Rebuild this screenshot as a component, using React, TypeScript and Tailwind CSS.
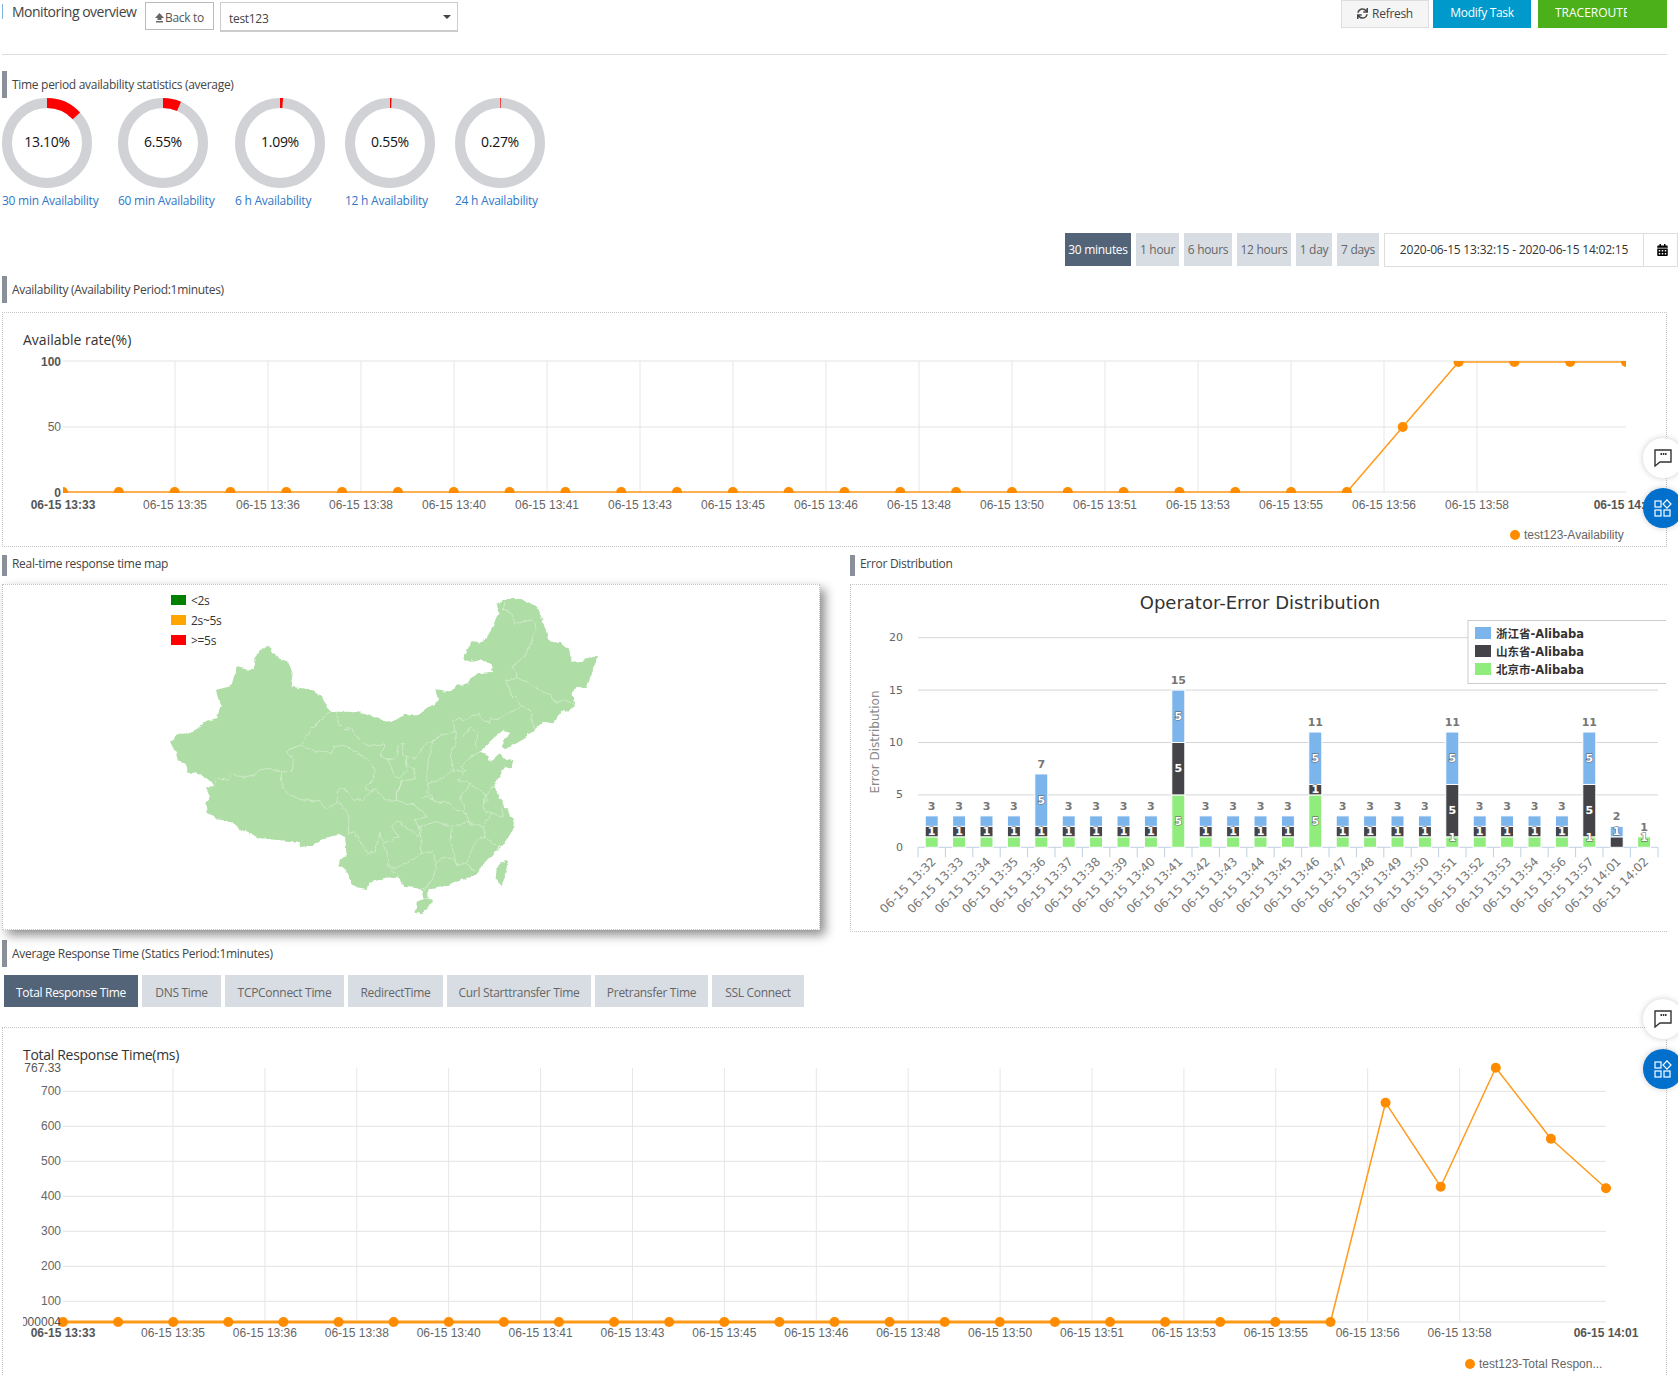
import { FaCalendarAlt, FaSync } from 'react-icons/fa';

const timeLabels = ['13:35', '13:36', '13:38', '13:40', '13:41', '13:43', '13:45', '13:46', '13:48', '13:50', '13:51', '13:53', '13:55', '13:56', '13:58'];

const donuts = [
	{ value: 13.1, text: '13.10%', label: '30 min Availability', width: 'w-[116px]' },
	{ value: 6.55, text: '6.55%', label: '60 min Availability', width: 'w-[117px]' },
	{ value: 1.09, text: '1.09%', label: '6 h Availability', width: 'w-[110px]' },
	{ value: 0.55, text: '0.55%', label: '12 h Availability', width: 'w-[110px]' },
	{ value: 0.27, text: '0.27%', label: '24 h Availability', width: 'w-[110px]' },
];

const ranges = [
	{ label: '30 minutes', width: 'w-[66px]', active: true },
	{ label: '1 hour', width: 'w-[43px]' },
	{ label: '6 hours', width: 'w-[48px]' },
	{ label: '12 hours', width: 'w-[54px]' },
	{ label: '1 day', width: 'w-[36px]' },
	{ label: '7 days', width: 'w-[42px]' },
];

const tabs = [
	{ label: 'Total Response Time', width: 'w-[134px]', active: true },
	{ label: 'DNS Time', width: 'w-[79px]' },
	{ label: 'TCPConnect Time', width: 'w-[119px]' },
	{ label: 'RedirectTime', width: 'w-[95px]' },
	{ label: 'Curl Starttransfer Time', width: 'w-[144px]' },
	{ label: 'Pretransfer Time', width: 'w-[113px]' },
	{ label: 'SSL Connect', width: 'w-[92px]' },
];

// green, dark, blue per minute
const errorBars: [string, number, number, number][] = [
	['13:32', 1, 1, 1], ['13:33', 1, 1, 1], ['13:34', 1, 1, 1], ['13:35', 1, 1, 1], ['13:36', 1, 1, 5],
	['13:37', 1, 1, 1], ['13:38', 1, 1, 1], ['13:39', 1, 1, 1], ['13:40', 1, 1, 1], ['13:41', 5, 5, 5],
	['13:42', 1, 1, 1], ['13:43', 1, 1, 1], ['13:44', 1, 1, 1], ['13:45', 1, 1, 1], ['13:46', 5, 1, 5],
	['13:47', 1, 1, 1], ['13:48', 1, 1, 1], ['13:49', 1, 1, 1], ['13:50', 1, 1, 1], ['13:51', 1, 5, 5],
	['13:52', 1, 1, 1], ['13:53', 1, 1, 1], ['13:54', 1, 1, 1], ['13:56', 1, 1, 1], ['13:57', 1, 5, 5],
	['14:01', 0, 1, 1], ['14:02', 1, 0, 0],
];

const Heading = ({ children }: { children: string }) => (
	<div className="flex h-[27px] items-center border-l-[5px] border-[#8a9099] pl-[5px] text-xs text-[#444]">
		{children}
	</div>
);

const Donut = ({ value, text }: { value: number; text: string }) => {
	const len = 2 * Math.PI * 40;
	return (
		<svg width="90" height="90" viewBox="0 0 90 90">
			<circle cx="45" cy="45" r="40" fill="none" stroke="#d1d2d6" strokeWidth="10" />
			<circle
				cx="45"
				cy="45"
				r="40"
				fill="none"
				stroke="#ff0000"
				strokeWidth="10"
				strokeDasharray={`${(len * value) / 100} ${len}`}
				transform="rotate(-90 45 45)"
			/>
			<text x="45" y="43" textAnchor="middle" dominantBaseline="central" className="fill-[#111] text-sm">
				{text}
			</text>
		</svg>
	);
};

type LineChartProps = {
	viewBox: string;
	id: string;
	right: number;
	top: number;
	bottom: number;
	grid: number[];
	gridStart: number;
	gridStep: number;
	labelY: number;
	values: number[];
	clip: boolean;
	baseEnd?: number;
	legend: string;
	legendX: number;
	legendY: number;
};

const LineChart = (p: LineChartProps) => {
	const step = (p.right - 63) / 28;
	const pts = p.values.map((y, i) => [63 + i * step, y]);
	return (
		<svg viewBox={p.viewBox} className="block h-full w-[1663px] font-['Liberation_Sans',sans-serif] text-xs tracking-normal">
			<clipPath id={p.id}>
				{p.clip ? (
					<rect x="63" y={p.top} width={p.right - 63} height={p.bottom - p.top + 1} />
				) : (
					<rect x="40" y={p.top - 10} width={p.right - 20} height={p.bottom - p.top + 20} />
				)}
			</clipPath>
			{p.grid.map((y) => (
				<line key={y} x1="63" x2={p.right} y1={y} y2={y} stroke="#e3e3e3" />
			))}
			{timeLabels.map((t, i) => (
				<g key={t}>
					<line
						x1={p.gridStart + i * p.gridStep}
						x2={p.gridStart + i * p.gridStep}
						y1={p.top}
						y2={p.bottom}
						stroke="#e6e6e6"
					/>
					<text
						x={p.gridStart + i * p.gridStep}
						y={p.labelY}
						textAnchor="middle"
						dominantBaseline="central"
						className="fill-[#666]"
					>
						06-15 {t}
					</text>
				</g>
			))}
			<text x="63" y={p.labelY} textAnchor="middle" dominantBaseline="central" className="fill-[#555] font-bold">
				06-15 13:33
			</text>
			<text x={p.right} y={p.labelY} textAnchor="middle" dominantBaseline="central" className="fill-[#555] font-bold">
				06-15 14:01
			</text>
			<g clipPath={`url(#${p.id})`}>
				{p.baseEnd && <line x1="63" x2={p.baseEnd} y1={p.bottom} y2={p.bottom} stroke="#ff9a1a" strokeWidth="3" />}
				<polyline
					points={pts.map((q) => q.join(',')).join(' ')}
					fill="none"
					stroke="#ff9a1a"
					strokeWidth="1.5"
					strokeLinejoin="round"
				/>
				{pts.map(([x, y]) => (
					<circle key={x} cx={x} cy={y} r="5" fill="#ff8c00" />
				))}
			</g>
			<circle cx={p.legendX} cy={p.legendY} r="5" fill="#ff8c00" />
			<text x={p.legendX + 9} y={p.legendY} dominantBaseline="central" className="fill-[#666]">
				{p.legend}
			</text>
		</svg>
	);
};

const ErrorChart = () => {
	const base = 847.3;
	const unit = 10.48;
	const start = 918;
	const band = 27.4;
	return (
		<svg viewBox="851 585 815 346" className="block h-full w-[815px] font-['DejaVu_Sans','Noto_Sans_CJK_SC',sans-serif]">
			<text x="1260" y="602" textAnchor="middle" dominantBaseline="central" className="fill-[#333] text-[18px]">
				Operator-Error Distribution
			</text>
			{[20, 15, 10, 5].map((v) => (
				<line key={v} x1={start} x2="1658" y1={base - v * unit} y2={base - v * unit} stroke="#d4d6d8" />
			))}
			{[20, 15, 10, 5, 0].map((v) => (
				<text key={v} x="903" y={base - v * unit} textAnchor="end" dominantBaseline="central" className="fill-[#666] text-[11px]">
					{v}
				</text>
			))}
			<text
				x="875"
				y="742"
				textAnchor="middle"
				dominantBaseline="central"
				transform="rotate(-90 875 742)"
				className="fill-[#888] text-xs"
			>
				Error Distribution
			</text>
			<line x1={start} x2="1658" y1={base} y2={base} stroke="#c0d0e0" />
			{errorBars.map(([t, green, dark, blue], i) => {
				const cx = start + band * (i + 0.5);
				const tick = start + band * i;
				const segs = [
					{ v: green, from: 0, fill: '#90ed7d', show: green === 5 || dark === 5 || dark === 0, lift: green === 1 ? 5 : 0 },
					{ v: dark, from: green, fill: '#434348', show: blue !== 1 || green !== 0, lift: 0 },
					{ v: blue, from: green + dark, fill: '#7cb5ec', show: blue === 5 || green === 0, lift: 0 },
				];
				const total = green + dark + blue;
				return (
					<g key={t}>
						<line x1={tick} x2={tick} y1={base} y2={base + 10} stroke="#c0d0e0" />
						{segs.map(
							(s) =>
								s.v > 0 && (
									<rect
										key={s.fill}
										x={cx - 6.5}
										y={base - (s.from + s.v) * unit}
										width="13"
										height={s.v * unit}
										fill={s.fill}
										stroke="#fff"
										strokeWidth="1"
									/>
								),
						)}
						{segs.map(
							(s) =>
								s.v > 0 &&
								s.show && (
									<text
										key={s.fill}
										x={cx}
										y={base - (s.from + s.v / 2) * unit - s.lift}
										textAnchor="middle"
										dominantBaseline="central"
										className="fill-white stroke-[#555] text-[11px] font-bold [paint-order:stroke] [stroke-width:1px]"
									>
										{s.v}
									</text>
								),
						)}
						<text
							x={cx}
							y={base - total * unit - 9.5}
							textAnchor="middle"
							dominantBaseline="central"
							className="fill-[#777] text-[11px] font-bold"
						>
							{total}
						</text>
						<text
							x={cx + 5}
							y={base + 15}
							textAnchor="end"
							transform={`rotate(-45 ${cx + 5} ${base + 15})`}
							className="fill-[#777] text-xs"
						>
							06-15 {t}
						</text>
					</g>
				);
			})}
			<line x1="1658" x2="1658" y1={base} y2={base + 10} stroke="#c0d0e0" />
			<rect x="1468" y="620.5" width="210" height="63" fill="#fff" stroke="#ccc" />
			{[
				['浙江省-Alibaba', '#7cb5ec', 627],
				['山东省-Alibaba', '#434348', 645],
				['北京市-Alibaba', '#90ed7d', 663],
			].map(([name, color, y]) => (
				<g key={name as string}>
					<rect x="1475" y={y} width="16" height="12" fill={color as string} />
					<text x="1496" y={(y as number) + 7} dominantBaseline="central" className="fill-[#333] text-[11.5px] font-bold">
						{name}
					</text>
				</g>
			))}
		</svg>
	);
};

const ChinaMap = () => (
	<svg width="470" height="340" viewBox="0 0 1410 1020" className="ml-[147px] mt-[5px] block">
		<filter id="rough" x="0" y="0" width="100%" height="100%">
			<feTurbulence type="fractalNoise" baseFrequency="0.05" numOctaves="2" seed="4" />
			<feDisplacementMap in="SourceGraphic" scale="14" xChannelSelector="R" yChannelSelector="G" />
		</filter>
		<g filter="url(#rough)">
			<g fill="#aedda6">
				<polygon points="62,460 78,435 105,425 125,430 160,400 200,383 212,350 197,300 245,288 260,232 300,240 315,235 313,205 340,172 358,172 385,205 415,215 428,250 422,290 475,297 517,320 540,365 590,365 640,368 680,385 718,397 765,375 810,372 838,350 865,335 856,298 905,305 920,288 955,280 965,262 1000,248 1030,245 1020,220 990,208 950,215 940,205 965,153 990,158 1020,130 1040,80 1050,65 1037,42 1060,30 1110,23 1145,42 1165,55 1190,130 1195,152 1230,160 1258,180 1265,215 1300,212 1345,195 1330,235 1310,295 1280,290 1268,310 1272,345 1255,365 1240,360 1210,400 1180,395 1155,418 1125,445 1100,460 1065,478 1055,470 1077,425 1060,420 1030,445 1000,475 990,485 1015,495 1020,515 1050,490 1060,505 1090,510 1085,530 1055,540 1040,575 1030,590 1065,650 1075,660 1080,680 1095,685 1090,710 1060,765 1050,770 1000,825 975,855 920,875 895,885 860,895 835,898 835,925 820,925 815,900 805,895 760,890 752,865 735,860 700,865 655,880 650,900 620,895 605,880 590,840 565,830 570,810 590,795 585,740 565,735 520,745 490,765 452,772 445,755 385,750 330,745 275,720 245,695 200,688 170,665 165,635 180,620 168,595 190,585 155,555 115,545 105,520 85,515 75,480" />
				<polygon points="800,935 825,925 850,930 835,955 815,970 797,965" />
				<polygon points="1065,810 1075,815 1070,850 1055,885 1037,865 1040,835" />
			</g>
			<g fill="none" stroke="#dcf0d7" strokeWidth="2" strokeLinejoin="round">
				<polyline points="540,365 510,390 480,420 455,465 410,482 432,515 425,545 395,545 360,535 325,540 320,552 285,562 250,553 235,567 200,565 185,590 168,595" />
				<polyline points="455,465 500,485 545,490 555,465 590,472 620,485 660,515 678,545 660,580 640,590 660,605 640,630 610,625 580,595 565,600 560,640 530,655 510,635 450,628 410,610 395,575 395,545" />
				<polyline points="560,365 565,400 585,420 605,415 620,440 650,470 700,460 700,480 690,495 715,510 735,560 750,565 770,540 770,520 795,540 795,565 755,575 735,630 705,630 680,595 660,605" />
				<polyline points="715,510 738,500 745,465 760,460 755,490 770,500 770,520" />
				<polyline points="770,500 795,505 830,460 850,450 875,435 915,425 910,395 925,385 945,390 985,370 1000,395 1020,400 1020,385 1035,385 1045,385 1105,355 1115,345 1140,360 1150,405 1155,418" />
				<polyline points="1065,35 1060,60 1085,70 1095,100 1145,90 1160,110 1145,150 1130,195 1085,230 1100,250 1100,262 1070,270 1085,320 1100,320 1110,345" />
				<polyline points="1100,262 1150,290 1190,310 1205,315 1220,340 1250,330 1272,345" />
				<polyline points="850,450 835,510 830,580" />
				<polyline points="915,425 920,455 900,490 910,535 905,540 880,565 830,582 835,610 860,635 900,640 915,660 945,665 955,700 1000,710 1025,670 1005,665 1000,630 1015,630 990,600 960,580 925,570 945,545 905,540" />
				<polyline points="940,440 965,412 985,430 975,465 985,480" />
				<polyline points="945,545 935,530 955,505 990,485" />
				<polyline points="815,625 835,618 860,635" />
				<polyline points="960,580 950,600 930,620 945,660" />
				<polyline points="1000,630 1040,575" />
				<polyline points="735,630 790,645 815,660 830,680 795,690 805,710 805,740 780,720 740,690 725,710 745,740 700,760 690,730 675,785 655,790 610,725 595,730 597,675 565,635" />
				<polyline points="805,710 860,695 905,710 940,700 970,695" />
				<polyline points="810,710 815,790 850,785 855,815 875,805 910,805" />
				<polyline points="905,715 900,750 915,805 920,825 945,820 975,845" />
				<polyline points="1000,710 1005,740 975,755 950,820" />
				<polyline points="1025,670 1060,680 1055,650" />
				<polyline points="1000,740 1040,765" />
				<polyline points="700,760 710,800 715,825 740,835 815,790" />
				<polyline points="710,825 745,855 752,865" />
				<polyline points="860,815 850,865 820,900" />
				<polyline points="755,575 735,630" />
			</g>
		</g>
	</svg>
);

const FloatButtons = ({ top }: { top: string }) => (
	<div className={`absolute right-[-5px] flex flex-col gap-[10px] ${top}`}>
		<div className="flex h-[40px] w-[40px] items-center justify-center rounded-full bg-white shadow-[0_0_6px_rgba(0,0,0,0.2)]">
			<svg width="18" height="18" viewBox="0 0 18 18" fill="none">
				<path d="M1 1H17V13H6L1 17Z" stroke="#333" strokeWidth="1.4" />
				<path d="M6.5 5H8M8.8 5H10.3M11 5H12.5" stroke="#333" strokeWidth="2" />
			</svg>
		</div>
		<div className="flex h-[40px] w-[40px] items-center justify-center rounded-full bg-[#0070cc] shadow-[0_0_6px_rgba(0,0,0,0.2)]">
			<svg width="18" height="18" viewBox="0 0 18 18" fill="none" stroke="#fff" strokeWidth="1.2">
				<rect x="1" y="2" width="6" height="6" />
				<path d="M13 0.8L17 5L13 9.2L9 5Z" />
				<rect x="1" y="11" width="6" height="6" />
				<rect x="10" y="11" width="6" height="6" />
			</svg>
		</div>
	</div>
);

const App = () => {
	const avail = Array.from({ length: 29 }, (_, i) => (i <= 23 ? 492 : i === 24 ? 427 : 362));
	const resp = [
		...Array.from({ length: 24 }, () => 1322),
		1102.7,
		1186.7,
		1067.7,
		1138.7,
		1188.3,
	];

	return (
		<div className="relative h-[1375px] w-[1678px] overflow-hidden bg-white pl-[2px] font-['Open_Sans',sans-serif] tracking-[-0.3px] text-[#444]">
			<header className="flex h-[55px] w-[1665px] justify-between border-b border-[#ddd]">
				<div className="flex items-start">
					<div className="mt-[4px] flex h-[15px] w-[133px] items-center whitespace-nowrap border-l border-[#7db6de] pl-[9px] text-sm tracking-[-0.5px] text-[#444]">
						Monitoring overview
					</div>
					<button className="ml-[10px] mt-[2px] flex h-[28px] w-[69px] items-center justify-center gap-[1px] border border-[#bbb] pt-[3px] text-xs text-[#555]">
						<svg width="9" height="10" viewBox="0 0 9 10" fill="#666">
							<path d="M4.5 0L9 5H6.5V7H2.5V5H0ZM1 8H8V9.5H1Z" />
						</svg>
						Back to
					</button>
					<div className="ml-[6px] mt-[2px] flex h-[30px] w-[238px] items-center justify-between border border-b-2 border-[#ccc] pl-[8px] pr-[6px] text-xs text-[#444]">
						<span className="pt-[4px]">test123</span>
						<span className="h-0 w-0 border-x-4 border-t-4 border-x-transparent border-t-[#444]" />
					</div>
				</div>
				<div className="flex items-start">
					<button className="flex h-[28px] w-[88px] items-center justify-center gap-[4px] border border-[#ddd] bg-[#f5f5f5] pb-[1px] text-xs text-[#444]">
						<FaSync className="h-[11px] w-[11px]" />
						Refresh
					</button>
					<button className="ml-[4px] flex h-[28px] w-[98px] items-center justify-center bg-[#0099cb] pb-[2px] text-xs text-white">
						Modify Task
					</button>
					<button className="ml-[7px] flex h-[28px] w-[129px] items-center bg-[#4cb01a] pb-[3px] pl-[17px] text-xs tracking-normal text-white">
						<span className="w-[72px] overflow-hidden whitespace-nowrap">TRACEROUTE</span>
					</button>
				</div>
			</header>

			<section className="mt-[16px]">
				<Heading>Time period availability statistics (average)</Heading>
				<div className="flex">
					{donuts.map((d) => (
						<div key={d.label} className={d.width}>
							<Donut value={d.value} text={d.text} />
							<div className="mt-[4px] h-[18px] text-xs leading-[18px] tracking-[-0.25px] text-[#2f78c9]">{d.label}</div>
						</div>
					))}
				</div>
			</section>

			<div className="mt-[23px] flex w-[1676px] items-start justify-end gap-[5px]">
				{ranges.map((r) => (
					<button
						key={r.label}
						className={
							r.active
								? `h-[33px] ${r.width} bg-[#536478] text-xs text-white`
								: `h-[33px] ${r.width} bg-[#d8dde4] text-xs text-[#666]`
						}
					>
						{r.label}
					</button>
				))}
				<div className="flex h-[34px]">
					<div className="flex w-[260px] items-center justify-center border border-[#ddd] text-xs tracking-[-0.2px] text-[#333]">
						2020-06-15 13:32:15 - 2020-06-15 14:02:15
					</div>
					<div className="flex w-[34px] items-center justify-center border-y border-r border-[#ddd] pl-[3px] text-black">
						<FaCalendarAlt className="h-[12px] w-[11px]" />
					</div>
				</div>
			</div>

			<section className="mt-[9px] w-[1665px]">
				<Heading>Availability (Availability Period:1minutes)</Heading>
				<div className="relative mt-[9px] h-[235px] border border-dotted border-[#c4c4c4]">
					<div className="absolute left-[20px] top-[17px] text-sm tracking-normal text-[#333]">Available rate(%)</div>
					<LineChart
						viewBox="3 313 1663 233"
						id="avail-clip"
						right={1626}
						top={361}
						bottom={492}
						grid={[361, 427, 492]}
						gridStart={175}
						gridStep={93}
						labelY={505}
						values={avail}
						clip
						legend="test123-Availability"
						legendX={1515}
						legendY={535}
					/>
					<div className="absolute left-[21px] top-[41px] w-[37px] text-right font-['Liberation_Sans',sans-serif] text-xs font-bold leading-[16px] tracking-normal text-[#555]">
						100
					</div>
					<div className="absolute left-[21px] top-[106px] w-[37px] text-right font-['Liberation_Sans',sans-serif] text-xs leading-[16px] tracking-normal text-[#666]">
						50
					</div>
					<div className="absolute left-[21px] top-[172px] w-[37px] text-right font-['Liberation_Sans',sans-serif] text-xs font-bold leading-[16px] tracking-normal text-[#555]">
						0
					</div>
				</div>
			</section>

			<div className="mt-[8px] flex w-[1665px] items-start gap-[30px]">
				<section className="w-[818px]">
					<div className="flex h-[21px] items-center border-l-[5px] border-[#8a9099] pb-[4px] pl-[5px] text-xs text-[#444]">
						Real-time response time map
					</div>
					<div className="relative mt-[8px] h-[346px] border border-dotted border-[#c4c4c4] bg-white shadow-[5px_5px_10px_rgba(0,0,0,0.45)]">
						<ChinaMap />
						<div className="absolute left-[168px] top-[10px] flex flex-col gap-[10px] text-xs text-[#333]">
							<div className="flex h-[10px] items-center gap-[5px]">
								<span className="h-[10px] w-[15px] bg-[#008000]" />
								<span className="mt-[2px]">&lt;2s</span>
							</div>
							<div className="flex h-[10px] items-center gap-[5px]">
								<span className="h-[10px] w-[15px] bg-[#ffa500]" />
								<span className="mt-[2px]">2s~5s</span>
							</div>
							<div className="flex h-[10px] items-center gap-[5px]">
								<span className="h-[10px] w-[15px] bg-[#ff0000]" />
								<span className="mt-[2px]">&gt;=5s</span>
							</div>
						</div>
					</div>
				</section>
				<section className="w-[817px]">
					<div className="flex h-[21px] items-center border-l-[5px] border-[#8a9099] pb-[4px] pl-[5px] text-xs text-[#444]">
						Error Distribution
					</div>
					<div className="mt-[8px] h-[348px] border border-r-0 border-dotted border-[#c4c4c4] tracking-normal">
						<ErrorChart />
					</div>
				</section>
			</div>

			<section className="mt-[8px] w-[1665px]">
				<Heading>Average Response Time (Statics Period:1minutes)</Heading>
				<div className="ml-[2px] mt-[8px] flex gap-[4px]">
					{tabs.map((t) => (
						<button
							key={t.label}
							className={
								t.active
									? `h-[32px] ${t.width} bg-[#536478] pt-[3px] text-xs text-white`
									: `h-[32px] ${t.width} bg-[#d8dde4] pt-[3px] text-xs text-[#666]`
							}
						>
							{t.label}
						</button>
					))}
				</div>
				<div className="relative mt-[20px] h-[348px] border-x border-t border-dotted border-[#c4c4c4]">
					<div className="absolute left-[20px] top-[17px] text-sm text-[#333]">Total Response Time(ms)</div>
					<LineChart
						viewBox="3 1028 1663 347"
						id="resp-clip"
						right={1606}
						top={1068}
						bottom={1322}
						grid={[1091.3, 1126.3, 1161.3, 1196.3, 1231.3, 1266.3, 1301.3, 1322]}
						gridStart={173}
						gridStep={91.9}
						labelY={1333}
						values={resp}
						clip={false}
						baseEnd={1330}
						legend="test123-Total Respon..."
						legendX={1470}
						legendY={1364}
					/>
					<div className="absolute left-[20px] top-[32px] w-[38px] text-right font-['Liberation_Sans',sans-serif] text-xs leading-[16px] tracking-normal text-[#555]">
						767.33
					</div>
					{[
						['700', 'top-[55px]'],
						['600', 'top-[90px]'],
						['500', 'top-[125px]'],
						['400', 'top-[160px]'],
						['300', 'top-[195px]'],
						['200', 'top-[230px]'],
						['100', 'top-[265px]'],
					].map(([v, top]) => (
						<div
							key={v}
							className={`absolute left-[20px] w-[38px] text-right font-['Liberation_Sans',sans-serif] text-xs leading-[16px] tracking-normal text-[#666] ${top}`}
						>
							{v}
						</div>
					))}
					<div className="absolute left-[20px] top-[286px] flex w-[38px] justify-end overflow-hidden font-['Liberation_Sans',sans-serif] text-xs leading-[16px] tracking-normal text-[#555]">
						0.000004
					</div>
				</div>
			</section>

			<FloatButtons top="top-[438px]" />
			<FloatButtons top="top-[999px]" />
		</div>
	);
};

export default App;
